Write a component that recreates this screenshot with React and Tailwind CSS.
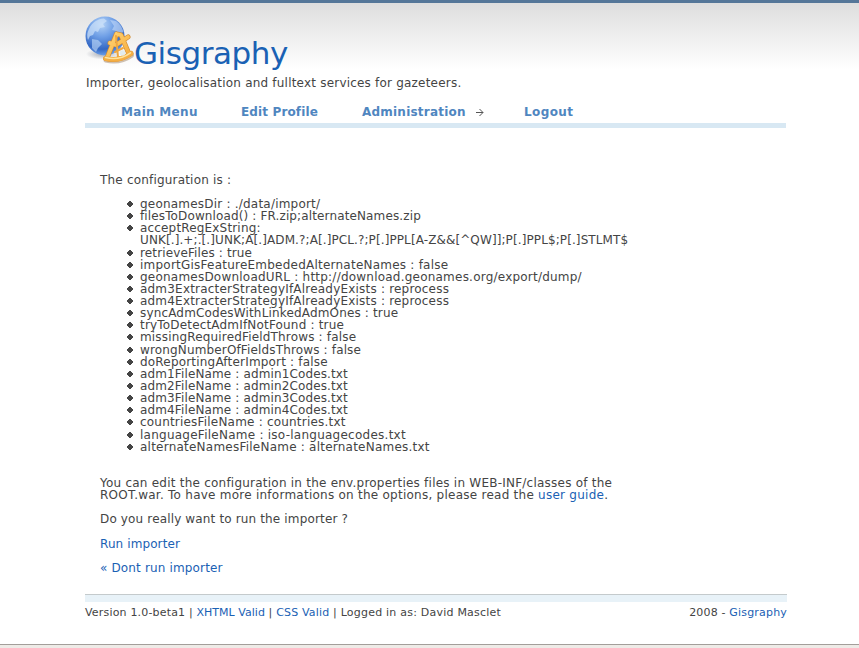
const items = [
  { text: 'geonamesDir : ./data/import/', style: 'tracking-[0.21px]' },
  { text: 'filesToDownload() : FR.zip;alternateNames.zip', style: 'tracking-[0.13px]' },
  {
    text: 'acceptRegExString:',
    style: 'tracking-[0.17px]',
    more: 'UNK[.].+;.[.]UNK;A[.]ADM.?;A[.]PCL.?;P[.]PPL[A-Z&&[^QW]];P[.]PPL$;P[.]STLMT$',
  },
  { text: 'retrieveFiles : true', style: 'mt-px tracking-[0.13px]' },
  { text: 'importGisFeatureEmbededAlternateNames : false', style: 'tracking-[0.23px]' },
  { text: 'geonamesDownloadURL : http://download.geonames.org/export/dump/', style: 'tracking-[0.22px]' },
  { text: 'adm3ExtracterStrategyIfAlreadyExists : reprocess', style: 'tracking-[0.2px]' },
  { text: 'adm4ExtracterStrategyIfAlreadyExists : reprocess', style: 'tracking-[0.2px]' },
  { text: 'syncAdmCodesWithLinkedAdmOnes : true', style: 'tracking-[0.16px]' },
  { text: 'tryToDetectAdmIfNotFound : true', style: 'tracking-[0.18px]' },
  { text: 'missingRequiredFieldThrows : false', style: 'tracking-[0.17px]' },
  { text: 'wrongNumberOfFieldsThrows : false', style: 'mt-px tracking-[0.15px]' },
  { text: 'doReportingAfterImport : false', style: 'tracking-[0.19px]' },
  { text: 'adm1FileName : admin1Codes.txt', style: 'tracking-[0.13px]' },
  { text: 'adm2FileName : admin2Codes.txt', style: 'tracking-[0.13px]' },
  { text: 'adm3FileName : admin3Codes.txt', style: 'tracking-[0.13px]' },
  { text: 'adm4FileName : admin4Codes.txt', style: 'tracking-[0.13px]' },
  { text: 'countriesFileName : countries.txt', style: 'tracking-[0.2px]' },
  { text: 'languageFileName : iso-languagecodes.txt', style: 'mt-px tracking-[0.25px]' },
  { text: 'alternateNamesFileName : alternateNames.txt', style: 'tracking-[0.23px]' },
];

function Logo() {
  return (
    <svg width="50" height="50" viewBox="0 0 50 50" className="shrink-0 overflow-visible">
      <defs>
        <radialGradient id="globe" cx="0.42" cy="0.2" r="0.8">
          <stop offset="0" stopColor="#b5d3f6" />
          <stop offset="0.4" stopColor="#6f9fe6" />
          <stop offset="0.8" stopColor="#3468c4" />
          <stop offset="1" stopColor="#6c9fe8" />
        </radialGradient>
        <linearGradient id="brass" x1="0" y1="0" x2="1" y2="1">
          <stop offset="0" stopColor="#ffd475" />
          <stop offset="1" stopColor="#f6ac3c" />
        </linearGradient>
        <radialGradient id="shade">
          <stop offset="0" stopColor="#6d7484" stopOpacity="0.6" />
          <stop offset="1" stopColor="#6d7484" stopOpacity="0" />
        </radialGradient>
      </defs>
      <ellipse cx="18" cy="38" rx="17" ry="5.5" fill="url(#shade)" />
      <circle cx="20" cy="20" r="19.5" fill="url(#globe)" />
      <path d="M4 13C7 6 13 3 19 2.500L22 5L18 8L20 11L15 12L13 16L10 15L8 19L5 20L3 24C1.500 19 2.500 16 4 13Z" fill="#cfe2fa" opacity="0.7" />
      <path d="M25 4L31 5C35 8 37 11 38.500 16L34 18L31 15L27 14L29 10Z" fill="#c4dbf8" opacity="0.6" />
      <path d="M7 23L13 24L17 28L13 32L11 36L7 32Z" fill="#b8d4f6" opacity="0.65" />
      <g fill="none" strokeLinecap="round" strokeLinejoin="round">
        <path d="M20.500 44.500Q35 48 47 39.500" stroke="#8b6845" strokeWidth="4" opacity="0.4" />
        <path d="M31.500 18L22.500 41M31.500 18L36 19L44 38M25 27L31 29L43 21M20.500 42.500Q34 46 46 37.500" stroke="#d18b32" strokeWidth="5" />
        <path d="M31.500 18L22.500 41M31.500 18L36 19L44 38M25 27L31 29L43 21" stroke="url(#brass)" strokeWidth="3.700" />
        <path d="M31 20L33 41M30 36L38 32" stroke="#efa740" strokeWidth="2" />
        <path d="M20.500 42.500Q34 46 46 37.500" stroke="#f5ae43" strokeWidth="4.600" />
        <path d="M20.500 41.600Q34 45 45.500 36.800" stroke="#ffe39c" strokeWidth="1.500" />
      </g>
      <circle cx="37.5" cy="37" r="2.8" fill="#e3eceb" />
    </svg>
  );
}

export default function App() {
  return (
    <div className="flex h-[648px] w-[859px] flex-col overflow-hidden bg-white font-['DejaVu_Sans',sans-serif] text-[12px] leading-[12px] text-[#444444]">
      <div className="h-[3px] shrink-0 bg-[#557799]" />
      <div className="h-[641px] shrink-0 bg-[linear-gradient(to_bottom,#dedede_0px,#ffffff_66px)] pl-[85px]">
        <header className="flex h-[74px] items-start pt-[13px]">
          <Logo />
          <h1 className="-ml-px pt-[19px] text-[31px] leading-[36px] tracking-[-0.45px] text-[#1a61b4]">Gisgraphy</h1>
        </header>
        <p className="h-[25px] whitespace-nowrap pl-px tracking-[0.205px]">
          Importer, geolocalisation and fulltext services for gazeteers.
        </p>
        <nav className="flex h-[26px] w-[701px] items-start border-b-[5px] border-[#d8e8f3] pl-9 pt-[4px] font-bold text-[#4f86c0]">
          <a className="w-[120px] tracking-[0.3px]">Main Menu</a>
          <a className="w-[121px] tracking-[0.13px]">Edit Profile</a>
          <a className="flex w-[162px] items-center tracking-[0.22px]">
            Administration
            <svg width="9" height="9" viewBox="0 0 9 9" className="ml-[9px]" fill="none" stroke="#555" strokeWidth="1">
              <path d="M1 4.500H8M4.500 1L8 4.500L4.500 8" />
            </svg>
          </a>
          <a className="tracking-[0.4px]">Logout</a>
        </nav>
        <main className="h-[466px] w-[560px] pl-[15px] pt-[46px] tracking-[0.15px]">
          <p className="tracking-[0.19px]">The configuration is :</p>
          <ul className="mt-3 pl-10">
            {items.map(({ text, style, more }) => (
              <li key={text} className={`relative whitespace-nowrap ${style}`}>
                <svg width="6" height="6" viewBox="0 0 6 6" className="absolute -left-[13px] top-[3px]">
                  <path d="M2 0H4V1H5V2H6V4H5V5H4V6H2V5H1V4H0V2H1V1H2Z" fill="#444" />
                </svg>
                {text}
                {more && <div className="tracking-[0.105px]">{more}</div>}
              </li>
            ))}
          </ul>
          <p className="mt-6 whitespace-nowrap tracking-[0.23px]">
            You can edit the configuration in the env.properties files in WEB-INF/classes of the
            <br />
            <span className="tracking-[0.25px]">
              ROOT.war. To have more informations on the options, please read the <a className="text-[#1a61b4]">user guide</a>.
            </span>
          </p>
          <p className="mt-3">Do you really want to run the importer ?</p>
          <p className="mt-[13px] tracking-[0.1px] text-[#1a61b4]">Run importer</p>
          <p className="mt-3 text-[#1a61b4]">« Dont run importer</p>
        </main>
        <footer className="w-[702px] whitespace-nowrap border-t border-[#c4cacc] text-[11px] leading-[13px] tracking-[0.18px]">
          <div className="h-[7px] bg-[#e8f2f8]" />
          <div className="flex justify-between pt-[4px]">
            <p>
              Version 1.0-beta1 | <a className="tracking-[0.02px] text-[#1a61b4]">XHTML Valid</a> | <a className="text-[#1a61b4]">CSS Valid</a> | <span className="tracking-[0.22px]">Logged in as: David Masclet</span>
            </p>
            <p>
              2008 - <a className="text-[#1a61b4]">Gisgraphy</a>
            </p>
          </div>
        </footer>
      </div>
      <div className="h-px shrink-0 bg-[#a39e9a]" />
      <div className="h-[3px] shrink-0 bg-[#eeebe7]" />
    </div>
  );
}
